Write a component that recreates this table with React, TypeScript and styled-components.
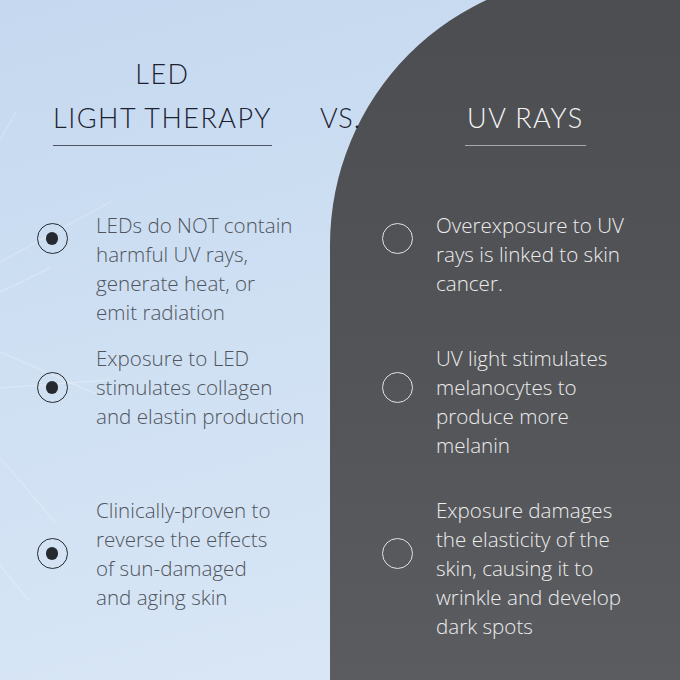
import React from "react";
import styled, { createGlobalStyle } from "styled-components";

const GlobalStyle = createGlobalStyle`
  html, body { margin: 0; padding: 0; background: #d3e3f5; }
  * { box-sizing: border-box; }
`;

const Page = styled.div`
  position: relative;
  width: 680px;
  height: 680px;
  overflow: hidden;
  display: grid;
  grid-template-columns: 330px 350px;
  background: linear-gradient(165deg, #c5d8ef 0%, #cfe0f3 45%, #dbe8f6 100%);
  font-family: "Open Sans", "Liberation Sans", sans-serif;
`;

const Streaks = styled.svg`
  position: absolute;
  left: 0;
  top: 0;
  width: 330px;
  height: 680px;
  pointer-events: none;
`;

const LeftCol = styled.section`
  position: relative;
  padding: 51.7px 0 0 0;
`;

const Panel = styled.section`
  position: relative;
  margin-top: -25px;
  height: 705px;
  border-top-left-radius: 270px;
  background: linear-gradient(180deg, #4c4d51 0%, #535458 55%, #5b5c60 100%);
  padding: 120.7px 0 0 0;
`;

const HeadingWrap = styled.div<{ $line: string; $pad: number; $left: number }>`
  display: inline-flex;
  flex-direction: column;
  align-items: center;
  margin-left: ${(p) => p.$left}px;
  padding: 0 ${(p) => p.$pad}px 5px;
  border-bottom: 1px solid ${(p) => p.$line};
`;

const Title = styled.h2<{ $color: string }>`
  margin: 0;
  font-family: Lato, "Liberation Sans", sans-serif;
  font-weight: 300;
  font-size: 27px;
  line-height: 44px;
  letter-spacing: 1.5px;
  color: ${(p) => p.$color};
  text-align: center;
  white-space: nowrap;
`;

const Vs = styled.span`
  position: absolute;
  left: 320px;
  top: 95.7px;
  z-index: 2;
  font-family: Lato, "Liberation Sans", sans-serif;
  font-weight: 300;
  font-size: 27px;
  line-height: 44px;
  letter-spacing: 1px;
  color: #1c2230;
`;

const List = styled.ul<{ $left: number }>`
  list-style: none;
  margin: 65.4px 0 0 0;
  padding: 0 0 0 ${(p) => p.$left}px;
  display: grid;
  grid-template-rows: 133px 152px auto;
`;

const Item = styled.li<{ $iconCol: number }>`
  display: grid;
  grid-template-columns: ${(p) => p.$iconCol}px auto;
  align-items: start;
`;

const Radio = styled.span<{ $top: number; $color: string }>`
  display: flex;
  align-items: center;
  justify-content: center;
  width: 31px;
  height: 31px;
  margin-top: ${(p) => p.$top}px;
  border: 1.5px solid ${(p) => p.$color};
  border-radius: 50%;
`;

const Dot = styled.span`
  width: 12.5px;
  height: 12.5px;
  border-radius: 50%;
  background: #262a30;
`;

const Text = styled.p<{ $color: string }>`
  margin: 0;
  font-size: 20.6px;
  line-height: 29px;
  font-weight: 300;
  color: ${(p) => p.$color};
  white-space: nowrap;
`;

type Entry = { lines: string[]; top: number };

const led: Entry[] = [
  { lines: ["LEDs do NOT contain", "harmful UV rays,", "generate heat, or", "emit radiation"], top: 12 },
  { lines: ["Exposure to LED", "stimulates collagen", "and elastin production"], top: 28 },
  { lines: ["Clinically-proven to", "reverse the effects", "of sun-damaged", "and aging skin"], top: 42 },
];

const uv: Entry[] = [
  { lines: ["Overexposure to UV", "rays is linked to skin", "cancer."], top: 12 },
  { lines: ["UV light stimulates", "melanocytes to", "produce more", "melanin"], top: 28 },
  {
    lines: ["Exposure damages", "the elasticity of the", "skin, causing it to", "wrinkle and develop", "dark spots"],
    top: 42,
  },
];

const Lines = ({ lines }: { lines: string[] }) => (
  <>
    {lines.map((l, i) => (
      <React.Fragment key={i}>
        {l}
        {i < lines.length - 1 && <br />}
      </React.Fragment>
    ))}
  </>
);

export default function App() {
  return (
    <>
      <GlobalStyle />
      <Page>
        <Streaks viewBox="0 0 330 680">
          <g stroke="#ffffff" strokeOpacity="0.22" strokeWidth="1.4" fill="none" strokeLinecap="round">
            <line x1="0" y1="140" x2="16" y2="112" />
            <line x1="0" y1="262" x2="110" y2="202" />
            <line x1="0" y1="292" x2="50" y2="268" />
            <line x1="0" y1="388" x2="110" y2="380" />
            <line x1="0" y1="352" x2="110" y2="400" />
            <line x1="0" y1="458" x2="55" y2="522" />
            <line x1="0" y1="565" x2="28" y2="600" />
          </g>
        </Streaks>
        <LeftCol>
          <HeadingWrap $line="#4d5564" $pad={0} $left={53}>
            <Title $color="#1c2230">LED</Title>
            <Title $color="#1c2230">LIGHT THERAPY</Title>
          </HeadingWrap>
          <List $left={36.7}>
            {led.map((e, i) => (
              <Item key={i} $iconCol={59.3}>
                <Radio $top={e.top} $color="#262a30">
                  <Dot />
                </Radio>
                <Text $color="#50555d">
                  <Lines lines={e.lines} />
                </Text>
              </Item>
            ))}
          </List>
        </LeftCol>
        <Vs>VS.</Vs>
        <Panel>
          <HeadingWrap $line="#a8a9ac" $pad={2} $left={135}>
            <Title $color="#f4f4f4">UV RAYS</Title>
          </HeadingWrap>
          <List $left={51.7}>
            {uv.map((e, i) => (
              <Item key={i} $iconCol={54.3}>
                <Radio $top={e.top} $color="#e2e2e2" />
                <Text $color="#ececec">
                  <Lines lines={e.lines} />
                </Text>
              </Item>
            ))}
          </List>
        </Panel>
      </Page>
    </>
  );
}
